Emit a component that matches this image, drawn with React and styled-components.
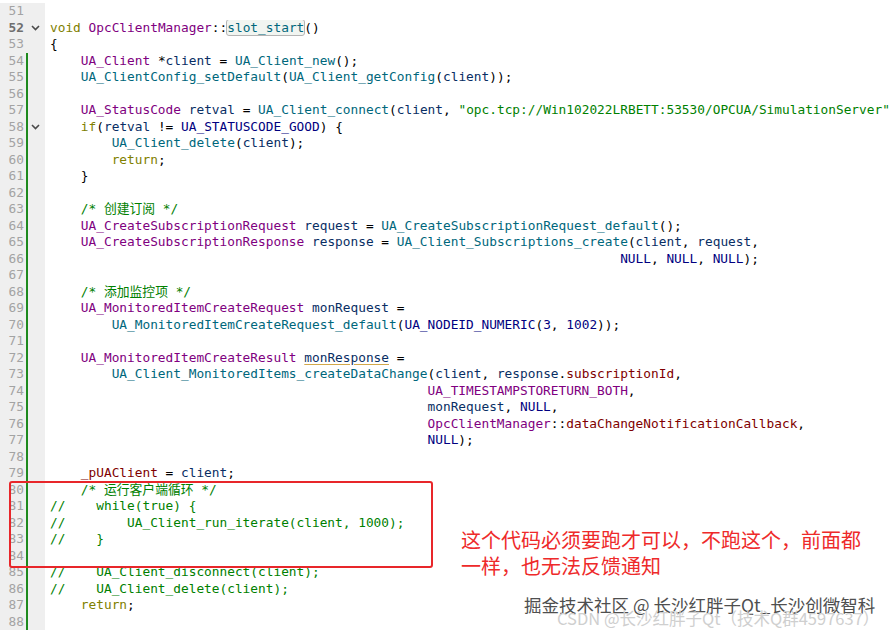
import React from "react"
import styled, { createGlobalStyle, css } from "styled-components"

const GlobalStyle = createGlobalStyle`
  html, body {
    margin: 0;
    padding: 0;
    background: #ffffff;
    overflow: hidden;
  }
`

const sp = (n) => " ".repeat(n)

// [lineNo, tokens, options]; a token is a plain string or [kind, text]
const lines = [
  [51, []],
  [52, [["k", "void"], " ", ["t", "OpcClientManager"], "::", ["box", "slot_start"], "()"], { fold: true, current: true }],
  [53, ["{"]],
  [54, [sp(4), ["t", "UA_Client"], " *", ["v", "client"], " = ", ["f", "UA_Client_new"], "();"]],
  [55, [sp(4), ["f", "UA_ClientConfig_setDefault"], "(", ["f", "UA_Client_getConfig"], "(", ["v", "client"], "));"]],
  [56, []],
  [57, [sp(4), ["t", "UA_StatusCode"], " ", ["v", "retval"], " = ", ["f", "UA_Client_connect"], "(", ["v", "client"], ", ", ["s", "\"opc.tcp://Win102022LRBETT:53530/OPCUA/SimulationServer\""], ");"]],
  [58, [sp(4), ["k", "if"], "(", ["v", "retval"], " != ", ["m", "UA_STATUSCODE_GOOD"], ") {"], { fold: true }],
  [59, [sp(8), ["f", "UA_Client_delete"], "(", ["v", "client"], ");"]],
  [60, [sp(8), ["k", "return"], ";"]],
  [61, [sp(4), "}"]],
  [62, []],
  [63, [sp(4), ["c", "/* 创建订阅 */"]]],
  [64, [sp(4), ["t", "UA_CreateSubscriptionRequest"], " ", ["v", "request"], " = ", ["f", "UA_CreateSubscriptionRequest_default"], "();"]],
  [65, [sp(4), ["t", "UA_CreateSubscriptionResponse"], " ", ["v", "response"], " = ", ["f", "UA_Client_Subscriptions_create"], "(", ["v", "client"], ", ", ["v", "request"], ","]],
  [66, [sp(74), ["m", "NULL"], ", ", ["m", "NULL"], ", ", ["m", "NULL"], ");"]],
  [67, []],
  [68, [sp(4), ["c", "/* 添加监控项 */"]]],
  [69, [sp(4), ["t", "UA_MonitoredItemCreateRequest"], " ", ["v", "monRequest"], " ="]],
  [70, [sp(8), ["f", "UA_MonitoredItemCreateRequest_default"], "(", ["m", "UA_NODEID_NUMERIC"], "(", ["n", "3"], ", ", ["n", "1002"], "));"]],
  [71, []],
  [72, [sp(4), ["t", "UA_MonitoredItemCreateResult"], " ", ["warn", "monResponse"], " ="]],
  [73, [sp(8), ["f", "UA_Client_MonitoredItems_createDataChange"], "(", ["v", "client"], ", ", ["v", "response"], ".", ["fd", "subscriptionId"], ","]],
  [74, [sp(49), ["t", "UA_TIMESTAMPSTORETURN_BOTH"], ","]],
  [75, [sp(49), ["v", "monRequest"], ", ", ["m", "NULL"], ","]],
  [76, [sp(49), ["t", "OpcClientManager"], "::", ["fd", "dataChangeNotificationCallback"], ","]],
  [77, [sp(49), ["m", "NULL"], ");"]],
  [78, []],
  [79, [sp(4), ["fd", "_pUAClient"], " = ", ["v", "client"], ";"]],
  [80, [sp(4), ["c", "/* 运行客户端循环 */"]]],
  [81, [["c", "//    while(true) {"]]],
  [82, [["c", "//        UA_Client_run_iterate(client, 1000);"]]],
  [83, [["c", "//    }"]]],
  [84, []],
  [85, [["c", "//    UA_Client_disconnect(client);"]]],
  [86, [["c", "//    UA_Client_delete(client);"]]],
  [87, [sp(4), ["k", "return"], ";"]],
  [88, []],
]

const FoldArrow = () => (
  <svg width="9" height="6" viewBox="0 0 9 6">
    <path d="M1 1 L4.5 4.5 L8 1" fill="none" stroke="#4a4a4a" strokeWidth="1.6" />
  </svg>
)

const App = () => (
  <>
    <GlobalStyle />
    <Screen>
      <Editor>
        {lines.map(([no, tokens, opts = {}]) => (
          <Row key={no}>
            <Gutter>
              <LineNo $current={opts.current}>{no}</LineNo>
              <ChangeBar $on={no >= 54} />
              <Fold>{opts.fold && <FoldArrow />}</Fold>
            </Gutter>
            <Code>
              {tokens.map((tok, i) =>
                typeof tok === "string" ? (
                  <React.Fragment key={i}>{tok}</React.Fragment>
                ) : (
                  <Tok key={i} $kind={tok[0]}>
                    {tok[1]}
                  </Tok>
                )
              )}
            </Code>
          </Row>
        ))}
      </Editor>

      <Highlight />

      <Note>
        这个代码必须要跑才可以，不跑这个，前面都
        <br />
        一样，也无法反馈通知
      </Note>

      <MarkMain>掘金技术社区 @ 长沙红胖子Qt_长沙创微智科</MarkMain>
      <MarkSub>CSDN @长沙红胖子Qt（技术Q群4597637）</MarkSub>
    </Screen>
  </>
)

export default App

const Screen = styled.div`
  position: relative;
  width: 891px;
  height: 633px;
  overflow: hidden;
  background: #ffffff;
`

const Editor = styled.div`
  display: flex;
  flex-direction: column;
  padding-top: 3px;
  font-family: "DejaVu Sans Mono", "Noto Sans CJK SC", monospace;
  font-size: 12.8px;
  line-height: 16.5px;
  color: #000000;
`

const Row = styled.div`
  display: grid;
  grid-template-columns: 45px 1fr;
  height: 16.5px;
`

const Gutter = styled.div`
  display: flex;
  align-items: stretch;
  background: #efefef;
`

const LineNo = styled.span`
  width: 24px;
  text-align: right;
  color: #a3a3a3;
  ${({ $current }) =>
    $current &&
    css`
      color: #6e6e6e;
      font-weight: bold;
    `}
`

const ChangeBar = styled.span`
  width: 2px;
  margin-left: 2px;
  background: ${({ $on }) => ($on ? "#1e8a1e" : "transparent")};
`

const Fold = styled.span`
  display: flex;
  align-items: center;
  justify-content: center;
  width: 14px;
`

const Code = styled.div`
  padding-left: 5px;
  white-space: pre;
  overflow: hidden;
`

const colors = {
  k: "#808000",
  t: "#800080",
  f: "#00677c",
  v: "#092e64",
  fd: "#800000",
  m: "#000080",
  n: "#000080",
  s: "#008000",
  c: "#008000",
  box: "#00677c",
  warn: "#092e64",
}

const Tok = styled.span`
  color: ${({ $kind }) => colors[$kind]};
  ${({ $kind }) =>
    $kind === "box" &&
    css`
      background: #f1f5f1;
      outline: 1px solid #b4b4b4;
      outline-offset: 0px;
      border-radius: 2px;
    `}
  ${({ $kind }) =>
    $kind === "warn" &&
    css`
      text-decoration: underline;
      text-decoration-color: #d2a84a;
      text-underline-offset: 2px;
    `}
`

const Highlight = styled.div`
  position: absolute;
  left: 9px;
  top: 481px;
  width: 420px;
  height: 83px;
  border: 2px solid #e8262a;
  border-radius: 3px;
`

const Note = styled.div`
  position: absolute;
  left: 461px;
  top: 527px;
  font-family: "Noto Sans CJK SC", sans-serif;
  font-size: 20px;
  line-height: 26px;
  color: #ee2a2a;
`

const markBase = css`
  position: absolute;
  font-family: "Noto Sans CJK SC", sans-serif;
  white-space: nowrap;
`

const MarkSub = styled.div`
  ${markBase};
  left: 557px;
  top: 607px;
  font-size: 16.5px;
  line-height: 22px;
  color: #cfcfcf;
`

const MarkMain = styled.div`
  ${markBase};
  left: 524px;
  top: 593px;
  font-size: 17.5px;
  line-height: 24px;
  color: #4f4f4f;
  text-shadow: 0 0 2px #ffffff, 0 0 2px #ffffff, 0 0 1px #ffffff;
`
